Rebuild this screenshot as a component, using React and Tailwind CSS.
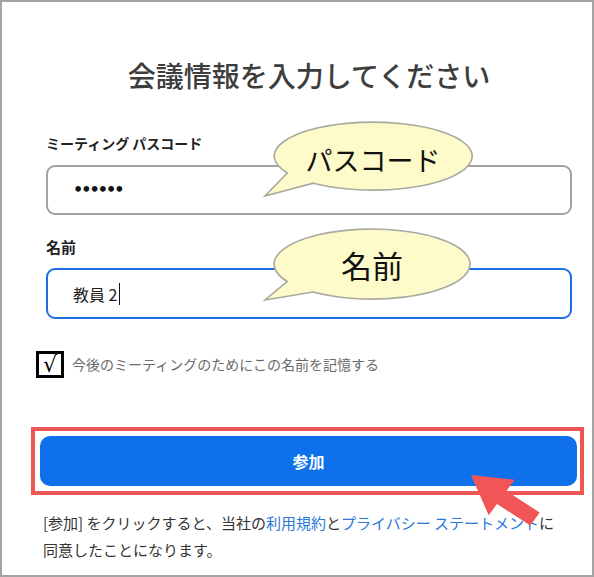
import React from "react";

const font = { fontFamily: '"Noto Sans CJK JP", "Noto Sans", sans-serif' };

const Bubbles = () => (
  <svg
    className="absolute left-0 top-0 pointer-events-none"
    width="594"
    height="577"
    viewBox="0 0 594 577"
  >
    <path
      d="M 311.4 181.2 A 99 34 0 1 0 285.3 171 L 263 194 Z"
      fill="#fdfbc9"
      stroke="#a9a9a0"
      strokeWidth="1.6"
    />
    <text
      x="371"
      y="157"
      textAnchor="middle"
      dominantBaseline="central"
      fontSize="27"
      fill="#111"
      style={font}
    >
      パスコード
    </text>
    <path
      d="M 311 290 A 98 35 0 1 0 285.1 279.5 L 263 298 Z"
      fill="#fdfbc9"
      stroke="#a9a9a0"
      strokeWidth="1.6"
    />
    <text
      x="370"
      y="262"
      textAnchor="middle"
      dominantBaseline="central"
      fontSize="31"
      fill="#111"
      style={font}
    >
      名前
    </text>
    {/* red arrow */}
    <polygon
      points="469,473 512.7,477.7 504.4,489 537.7,510.5 528.3,523.5 495,502 486.7,513.3"
      fill="#f25555"
    />
  </svg>
);

export default function App() {
  return (
    <div
      className="relative w-[594px] h-[577px] bg-white border-2 border-[#a4a4a4] overflow-hidden"
      style={font}
    >
      <div className="pt-[55px] pl-[44px] pr-[20px]">
        <h1 className="text-center text-[28px] leading-[36px] font-medium text-[#3d3d3d]">
          会議情報を入力してください
        </h1>

        <div className="mt-[40px] text-[14px] leading-[20px] font-bold text-[#222]">
          ミーティング パスコード
        </div>
        <div className="mt-[12px] h-[50px] rounded-[9px] border-2 border-[#a2a2a2] flex items-center pl-[25px]">
          <span
            className="text-[16px] font-bold tracking-[-2px] text-[#111]"
            style={{ fontFamily: '"DejaVu Sans", sans-serif' }}
          >
            ••••••
          </span>
        </div>

        <div className="mt-[22px] text-[15px] leading-[20px] font-bold text-[#222]">名前</div>
        <div className="mt-[11px] h-[51px] rounded-[9px] border-2 border-[#1d6fdf] flex items-center pl-[25px]">
          <span className="text-[16px] text-[#222]">教員 2</span>
          <span className="ml-[2px] w-[1px] h-[22px] bg-[#111]" />
        </div>

        <div className="mt-[32px] ml-[-10px] flex items-center gap-[8px]">
          <div className="w-[28px] h-[27px] border-[3px] border-black flex items-center justify-center">
            <span className="text-[22px] leading-none text-black" style={{ fontFamily: '"DejaVu Sans", sans-serif' }}>
              √
            </span>
          </div>
          <span className="text-[14px] text-[#6a6a6a]">今後のミーティングのためにこの名前を記憶する</span>
        </div>

        <div className="mt-[49px] ml-[-15px] mr-[-12px] border-4 border-[#ee5555] pl-[5px] pr-[3px] pt-[5px] pb-[5px]">
          <div className="h-[50px] rounded-[10px] bg-[#0e71eb] flex items-center justify-center">
            <span className="text-[16px] font-bold text-white">参加</span>
          </div>
        </div>

        <p className="mt-[14px] ml-[-3px] text-[15px] leading-[27px] text-[#333]">
          [参加] をクリックすると、当社の<span className="text-[#2a78d6]">利用規約</span>と
          <span className="text-[#2a78d6]">プライバシー ステートメント</span>に
          <br />
          同意したことになります。
        </p>
      </div>
      <Bubbles />
    </div>
  );
}
